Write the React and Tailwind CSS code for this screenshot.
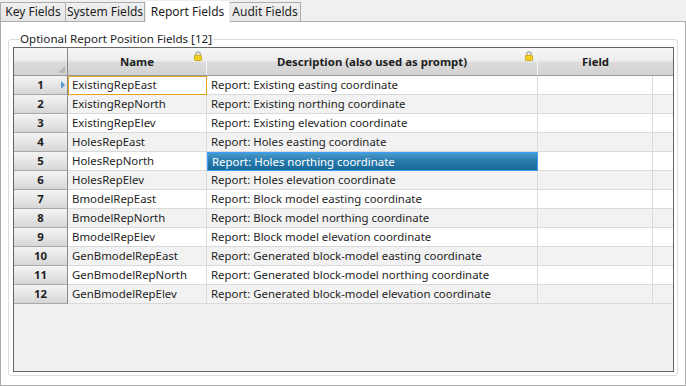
import React from "react";

const rows = [
  ["ExistingRepEast", "Report: Existing easting coordinate"],
  ["ExistingRepNorth", "Report: Existing northing coordinate"],
  ["ExistingRepElev", "Report: Existing elevation coordinate"],
  ["HolesRepEast", "Report: Holes easting coordinate"],
  ["HolesRepNorth", "Report: Holes northing coordinate"],
  ["HolesRepElev", "Report: Holes elevation coordinate"],
  ["BmodelRepEast", "Report: Block model easting coordinate"],
  ["BmodelRepNorth", "Report: Block model northing coordinate"],
  ["BmodelRepElev", "Report: Block model elevation coordinate"],
  ["GenBmodelRepEast", "Report: Generated block-model easting coordinate"],
  ["GenBmodelRepNorth", "Report: Generated block-model northing coordinate"],
  ["GenBmodelRepElev", "Report: Generated block-model elevation coordinate"],
];

function Lock() {
  return (
    <svg width="8" height="10" viewBox="0 0 8 10" className="absolute right-[4px] top-[3px]">
      <path d="M1.8 4.5V3a2.2 2.2 0 0 1 4.4 0v1.5" fill="none" stroke="#a8a8a8" strokeWidth="1.2" />
      <rect x="0.5" y="4.3" width="7" height="5.2" rx="0.8" fill="#f2cf1f" stroke="#c79a00" strokeWidth="0.8" />
    </svg>
  );
}

function Tab({ label, active, w }) {
  if (active) {
    return (
      <div className={`${w} h-[22px] relative z-10 -mb-px bg-white border border-b-0 border-[#ececec] flex items-center justify-center text-[#1e1e1e] text-[12px]`}>
        {label}
      </div>
    );
  }
  return (
    <div className={`${w} h-[19px] bg-[linear-gradient(to_bottom,#f0f0f0,#e5e5e5)] border border-b-0 border-[#acacac] flex items-center justify-center text-[#1e1e1e] text-[12px]`}>
      {label}
    </div>
  );
}

export default function App() {
  const hdr = "bg-[linear-gradient(to_bottom,#f7f7f7_0%,#ececec_48%,#dcdcdc_52%,#d2d2d2_100%)]";
  const rowHdr = "bg-[linear-gradient(to_bottom,#f4f4f4_0%,#e6e6e6_50%,#d6d6d6_100%)]";

  return (
    <div className="w-[686px] h-[386px] bg-[#f0f0f0] text-[11.4px] leading-none overflow-hidden" style={{ fontFamily: '"Noto Sans", "Open Sans", sans-serif' }}>
      <div className="flex items-end h-[21px] pl-0">
        <Tab label="Key Fields" w="w-[66px]" />
        <Tab label="System Fields" w="w-[80px] -ml-px" />
        <Tab label="Report Fields" w="w-[85px]" active />
        <Tab label="Audit Fields" w="w-[72px] -ml-px" />
      </div>

      <div className="h-[365px] bg-white border border-[#acacac] pt-[9px] pl-[7px] pr-[7px]">
        <fieldset className="border border-[#dcdcdc] rounded-[3px] pl-[4px] pr-[3px] pb-[3px]">
          <legend className="ml-[6px] px-[1px] h-[16px] leading-[16px] text-[#1e1e1e] text-[11.6px]">
            Optional Report Position Fields [12]
          </legend>

          <div className="h-[325px] border border-[#646464] bg-[#f0f0f0] flex flex-col">
            {/* header */}
            <div className={`flex h-[28px] border-b border-[#9a9a9a] ${hdr} font-bold text-[#1e1e1e]`}>
              <div className="w-[54px] border-r border-[#8a8a8a] relative">
                <div className="absolute right-[2px] bottom-[2px] w-0 h-0 border-l-[7px] border-l-transparent border-b-[7px] border-b-[#b8b8b8]" />
              </div>
              <div className="w-[139px] relative flex items-center justify-center border-r border-[#f4f4f4]">
                Name
                <Lock />
              </div>
              <div className="w-[331px] relative flex items-center justify-center border-r border-[#f4f4f4]">
                Description (also used as prompt)
                <Lock />
              </div>
              <div className="w-[115px] flex items-center justify-center">Field</div>
              <div className="flex-1" />
            </div>

            {rows.map(([name, desc], i) => {
              const alt = i % 2 === 1 ? "bg-[#f2f2f2]" : "bg-white";
              return (
                <div key={name} className="flex h-[19px] text-[#1e1e1e]">
                  <div className={`w-[54px] ${rowHdr} border-r border-[#8a8a8a] border-b border-b-[#a8a8a8] relative flex items-center justify-center font-bold`}>
                    {i + 1}
                    {i === 0 && (
                      <div className="absolute right-[2px] top-[5px] w-0 h-0 border-t-[4px] border-t-transparent border-b-[4px] border-b-transparent border-l-[4px] border-l-[#5b9bd5]" />
                    )}
                  </div>
                  <div className={`w-[139px] ${alt} border-r border-b border-[#dadada] flex items-center pl-[4px] ${i === 0 ? "outline outline-1 -outline-offset-1 outline-[#e3a21a]" : ""}`}>
                    {name}
                  </div>
                  {i === 4 ? (
                    <div className="w-[331px] bg-[linear-gradient(to_bottom,#4a9bcb_0%,#2a7cb0_45%,#17699a_100%)] border border-[#3aa0ff] text-white flex items-center pl-[4px]">
                      {desc}
                    </div>
                  ) : (
                    <div className={`w-[331px] ${alt} border-r border-b border-[#dadada] flex items-center pl-[4px]`}>
                      {desc}
                    </div>
                  )}
                  <div className={`w-[115px] ${alt} border-r border-b border-[#dadada]`} />
                  <div className={`flex-1 ${alt} border-b border-[#dadada]`} />
                </div>
              );
            })}
          </div>
        </fieldset>
      </div>
    </div>
  );
}
